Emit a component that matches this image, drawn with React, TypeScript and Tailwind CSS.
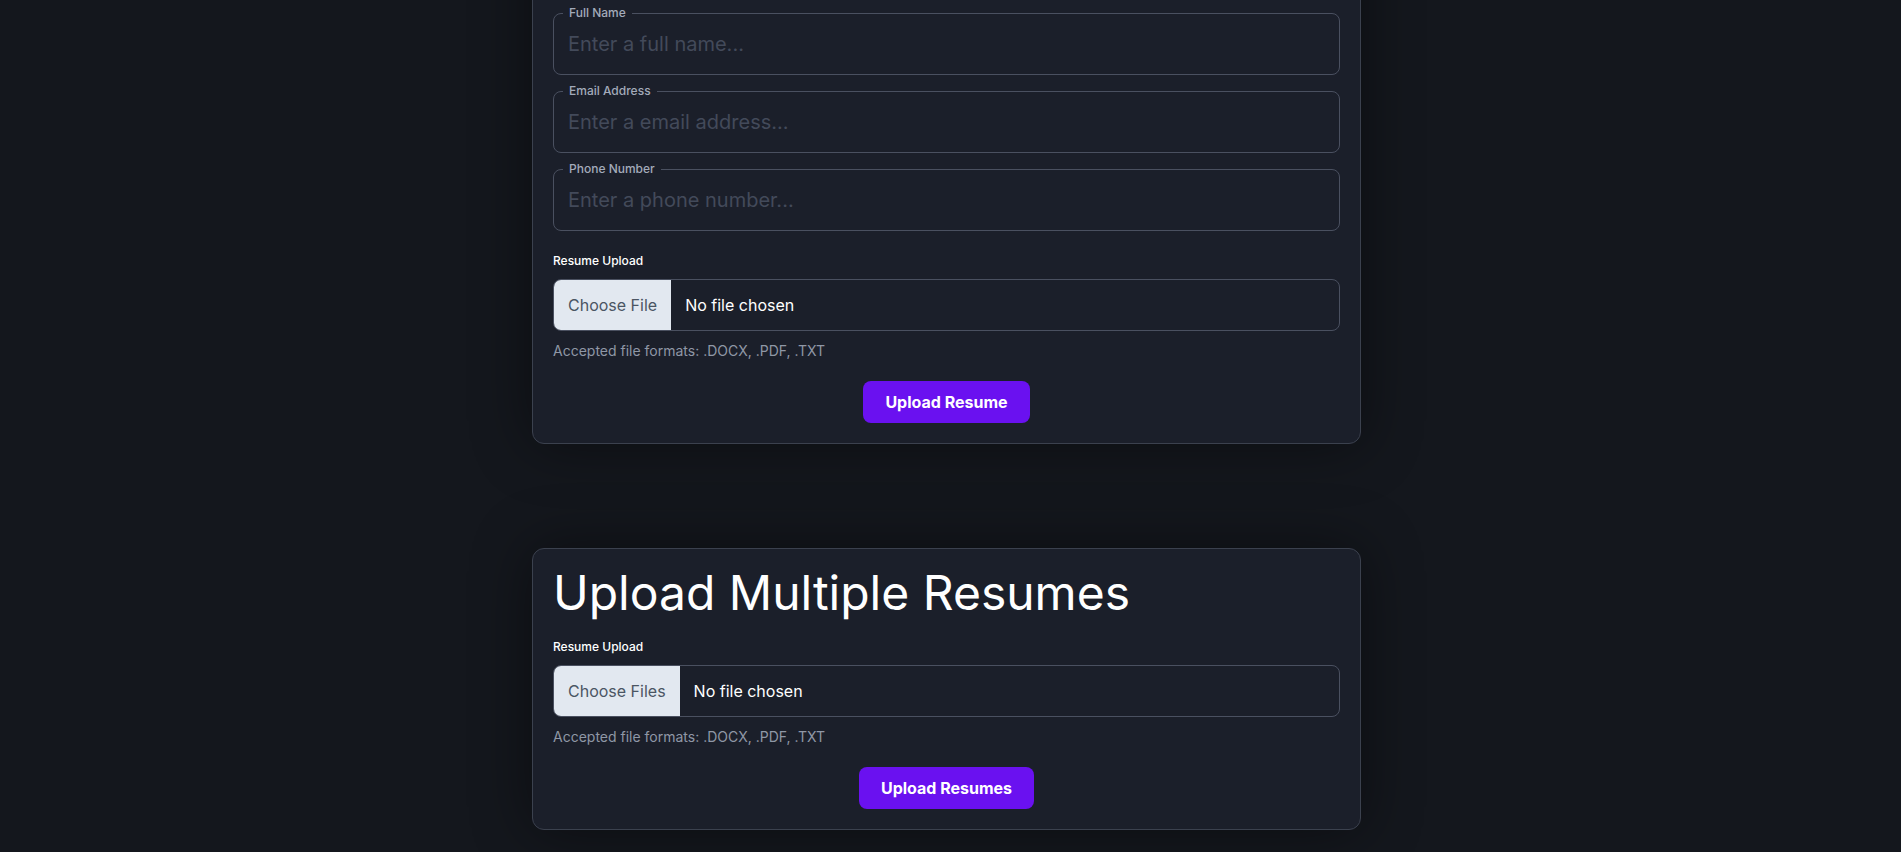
import React from 'react';

// Outlined text field with the label sitting in the top border
const Field = ({ label, placeholder }: { label: string; placeholder: string }) => (
  <fieldset className="rounded-lg border border-[#4a5060] px-[9px] pb-[7px]">
    <legend className="px-1.5 text-xs leading-4 font-medium text-[#a3abba]">{label}</legend>
    <input
      type="text"
      placeholder={placeholder}
      className="h-[46px] w-full bg-transparent pl-[5px] text-xl text-white outline-none placeholder:text-[#434a5a]"
    />
  </fieldset>
);

const ResumeUpload = ({ multiple, buttonText }: { multiple?: boolean; buttonText: string }) => (
  <div className="mt-[22px]">
    <label className="mb-[10px] block text-xs leading-4 font-medium text-white">Resume Upload</label>
    <input
      type="file"
      multiple={multiple}
      accept=".docx,.pdf,.txt"
      className="block h-[52px] w-full overflow-hidden rounded-lg border border-[#4a5060] text-base text-white file:mr-[14px] file:h-full file:cursor-pointer file:border-0 file:bg-[#e2e8f0] file:px-[14px] file:text-base file:text-[#4b5563]"
    />
    <p className="mt-[10px] text-sm leading-5 text-[#8f97a6]">Accepted file formats: .DOCX, .PDF, .TXT</p>
    <div className="mt-5 flex justify-center">
      <button className="h-[42px] rounded-lg bg-[#6a11f0] px-[22px] text-base font-bold text-white hover:bg-[#5b0dd6]">
        {buttonText}
      </button>
    </div>
  </div>
);

export default function App() {
  return (
    <div className="min-h-screen bg-[#14171d] font-['Inter','Noto_Sans',sans-serif] text-white">
      <main className="-mt-[74px] flex flex-col items-center gap-[104px] pr-[8px] pb-16">
        {/* Single resume card */}
        <section className="w-[829px] rounded-xl border border-[#3b414e] bg-[#1b1f2a] p-5 shadow-[0_0_60px_rgba(0,0,0,0.45)]">
          <h2 className="text-5xl leading-none">Upload Single Resume</h2>
          <div className="mt-[10px] flex flex-col gap-2">
            <Field label="Full Name" placeholder="Enter a full name..." />
            <Field label="Email Address" placeholder="Enter a email address..." />
            <Field label="Phone Number" placeholder="Enter a phone number..." />
          </div>
          <ResumeUpload buttonText="Upload Resume" />
        </section>

        {/* Multiple resumes card */}
        <section className="w-[829px] rounded-xl border border-[#3b414e] bg-[#1b1f2a] p-5 shadow-[0_0_60px_rgba(0,0,0,0.45)]">
          <h2 className="text-5xl leading-none">Upload Multiple Resumes</h2>
          <ResumeUpload multiple buttonText="Upload Resumes" />
        </section>
      </main>
    </div>
  );
}
